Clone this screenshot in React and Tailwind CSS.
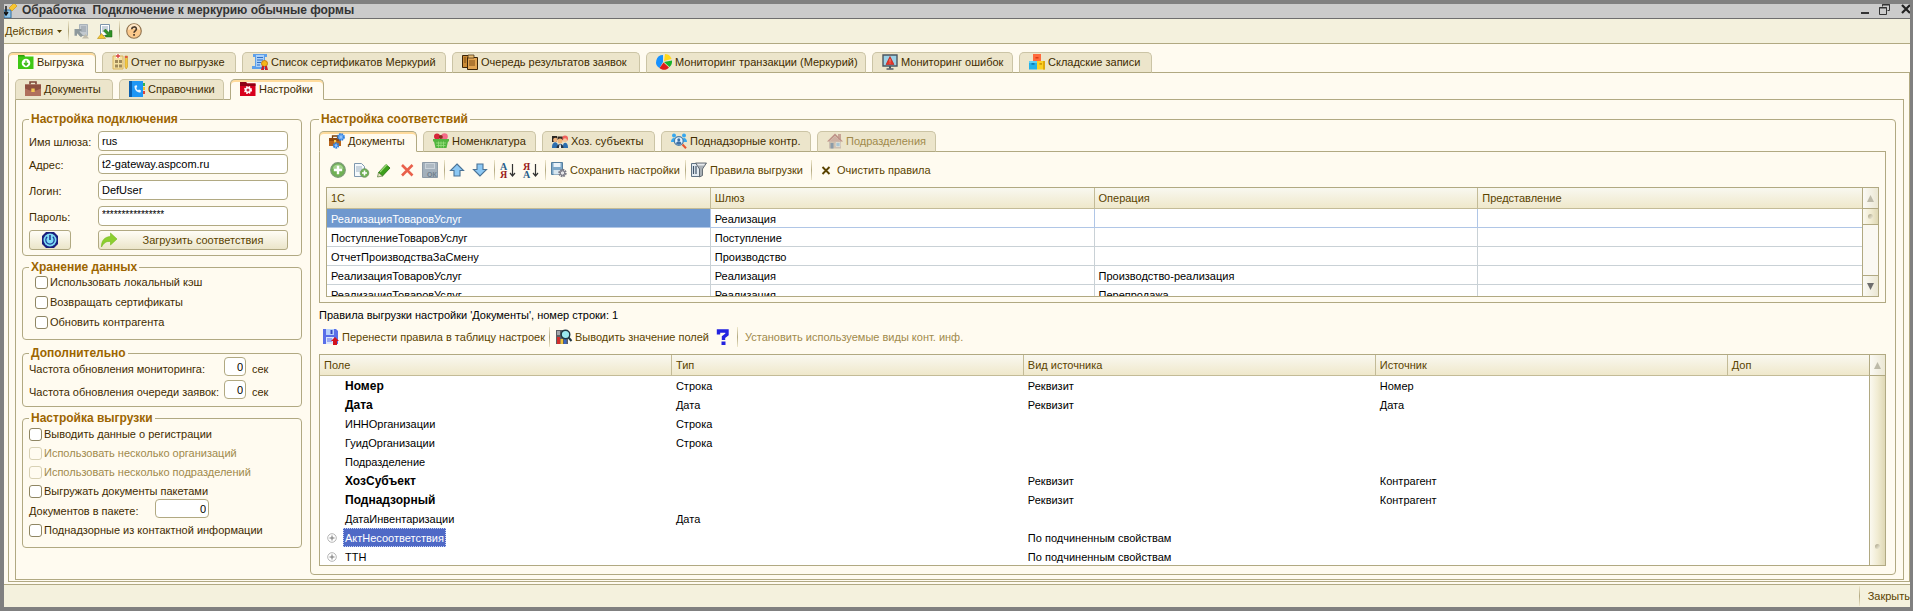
import { useState } from "react";
import clsx from "clsx";

const MAIN_TABS = [
  { id: "export", label: "Выгрузка", icon: "folderGreen", width: "w-[88px]" },
  { id: "report", label: "Отчет по выгрузке", icon: "report", width: "w-[134px]" },
  { id: "certs", label: "Список сертификатов Меркурий", icon: "certificate", width: "w-[204px]" },
  { id: "queue", label: "Очередь результатов заявок", icon: "papers", width: "w-[188px]" },
  { id: "transactions", label: "Мониторинг транзакции (Меркурий)", icon: "pie", width: "w-[220px]" },
  { id: "errors", label: "Мониторинг ошибок", icon: "monitor", width: "w-[141px]" },
  { id: "stock", label: "Складские записи", icon: "boxes", width: "w-[133px]" },
];

const SUB_TABS = [
  { id: "docs", label: "Документы", icon: "briefcase", width: "w-[98px]" },
  { id: "refs", label: "Справочники", icon: "phonebook", width: "w-[105px]" },
  { id: "settings", label: "Настройки", icon: "folderRed", width: "w-[94px]" },
];

const MAPPING_TABS = [
  { id: "docs", label: "Документы", icon: "caseGears", width: "w-[98px]" },
  { id: "items", label: "Номенклатура", icon: "basket", width: "w-[113px]" },
  { id: "subjects", label: "Хоз. субъекты", icon: "people", width: "w-[113px]" },
  { id: "supervised", label: "Поднадзорные контр.", icon: "inspect", width: "w-[150px]" },
  { id: "departments", label: "Подразделения", icon: "house", width: "w-[119px]", disabled: true },
];

const MAPPINGS = [
  ["РеализацияТоваровУслуг", "Реализация", "", ""],
  ["ПоступлениеТоваровУслуг", "Поступление", "", ""],
  ["ОтчетПроизводстваЗаСмену", "Производство", "", ""],
  ["РеализацияТоваровУслуг", "Реализация", "Производство-реализация", ""],
  ["РеализацияТоваровУслуг", "Реализация", "Перепродажа", ""],
];

const RULES = [
  { field: "Номер", type: "Строка", kind: "Реквизит", source: "Номер", bold: true },
  { field: "Дата", type: "Дата", kind: "Реквизит", source: "Дата", bold: true },
  { field: "ИННОрганизации", type: "Строка" },
  { field: "ГуидОрганизации", type: "Строка" },
  { field: "Подразделение" },
  { field: "ХозСубъект", kind: "Реквизит", source: "Контрагент", bold: true },
  { field: "Поднадзорный", kind: "Реквизит", source: "Контрагент", bold: true },
  { field: "ДатаИнвентаризации", type: "Дата" },
  { field: "АктНесоответствия", kind: "По подчиненным свойствам", group: true, selected: true },
  { field: "ТТН", kind: "По подчиненным свойствам", group: true },
];

const ICONS = {
  app: (
    <>
      <path d="M0 6h7v8H0z" fill="#8fc4e8" stroke="#2f6c9c" />
      <path d="M2 2v8M0 8l2 3 2-3" stroke="#111" strokeWidth="1.4" fill="none" />
      <path d="M5 4l5-5 3 3-5 5z" fill="#f7c531" stroke="#c88a12" strokeWidth=".6" />
    </>
  ),
  docPrev: (
    <>
      <path d="M5.500 1.500h8v11h-8z" fill="#c3cad0" stroke="#a9b3ba" />
      <path d="M7 4h5M7 6h5M7 8h5" stroke="#929ca6" />
      <path d="M0.500 6h7v2.200H5l4 4-2 2-4-4v2.500H.5z" fill="#8e999c" />
      <path d="M8 15.500l3.500-4.500 3.500 4.500z" fill="#c2bdab" />
    </>
  ),
  docNext: (
    <>
      <path d="M3.500 1.500h9v11h-9z" fill="#fff" stroke="#7d95ab" />
      <path d="M5 4h6M5 6h6M5 8h3" stroke="#8fa5b8" />
      <path d="M8.500 6l4 4V7.500H15v6.500H8.500v-2h2l-4-4z" fill="#2f9226" stroke="#1b6416" strokeWidth=".5" />
      <path d="M0.500 15.500l4-5 4 5z" fill="#f4c930" stroke="#b98d14" strokeWidth=".6" />
    </>
  ),
  help: (
    <>
      <circle cx="8" cy="8" r="7.300" fill="#fbc98c" stroke="#8f7350" strokeWidth="1.100" />
      <path d="M2 7a6 6 0 0 1 12 0c-4-2-8-2-12 0z" fill="#fde6c6" />
      <path d="M5.800 6.200c0-3 4.600-3 4.600-.2C10.400 7.800 8 7.800 8 9.800" fill="none" stroke="#4a3a2a" strokeWidth="1.600" />
      <path d="M7.200 11h1.700v1.700H7.200z" fill="#4a3a2a" />
    </>
  ),
  folderGreen: (
    <>
      <path d="M0 1h6l1 1.500h8.500V15H0z" fill="#3fc815" />
      <path d="M0 1h6l1 1.500H0z" fill="#2c9e0c" />
      <circle cx="8" cy="9" r="4.300" fill="#fff" />
      <path d="M8 6.500v4M6 9l2 2.200L10 9" stroke="#3fb81a" strokeWidth="1.400" fill="none" />
    </>
  ),
  folderRed: (
    <>
      <path d="M0 1h6l1 1.500h8.500V15H0z" fill="#d8001c" />
      <path d="M0 1h6l1 1.500h8.500V5H0z" fill="#8e0014" />
      <circle cx="8" cy="9" r="3" fill="#fff" stroke="#fff" strokeWidth="2" strokeDasharray="1.400 1" />
      <circle cx="8" cy="9" r="1.500" fill="#c4354a" />
    </>
  ),
  report: (
    <>
      <path d="M1 2h10v13H1z" fill="#f5e2a4" stroke="#d9b45f" />
      <path d="M4 0h4v4H4z" fill="#fff" />
      <path d="M6 0v4M4 2h4" stroke="#d8423c" strokeWidth="1.300" />
      <path d="M3 6h3v3H3zM7 6h3v3H7zM3 10.500h3v3H3zM7 10.500h3v3H7z" fill="#a08a5a" />
      <path d="M13 2h2.500v11L14.200 15 13 13z" fill="#f5c842" stroke="#c79a24" strokeWidth=".6" />
      <path d="M13 2h2.500v2H13z" fill="#dd5a41" />
    </>
  ),
  certificate: (
    <>
      <path d="M1 0h14v3h-2v12H0v-3h3V3H1z" fill="#5da0ea" />
      <path d="M4 1h8v12H4z" fill="#a8d0fa" />
      <path d="M5 3.500h6M5 6h6M5 8.500h4M5 11h3" stroke="#2f6fc4" strokeWidth="1.200" />
      <circle cx="12.500" cy="9.500" r="3" fill="#f5b618" stroke="#c47c10" />
      <path d="M10 12h2v4H9zM13 12h2l1 4h-3z" fill="#c81f2b" />
    </>
  ),
  papers: (
    <>
      <path d="M0.500 1.500h9v12h-9z" fill="#c98a35" stroke="#3c2508" />
      <path d="M5.500 3.500h10v12h-10z" fill="#e2a552" stroke="#3c2508" />
      <path d="M2 4h2M2 6h2M2 8h2M7 7h6M7 9h6M7 11h6" stroke="#7c4b12" />
      <path d="M6 1h6v3H6z" fill="#e9bd74" stroke="#3c2508" strokeWidth=".7" />
    </>
  ),
  pie: (
    <>
      <path d="M7 8V1a7 7 0 0 0-3.500 13z" fill="#1691ff" />
      <path d="M8 7l1-7c4 0 6 3 6.500 5z" fill="#ffd91a" />
      <path d="M8 8l8-1.500c.3 3-.7 5-2.500 6.500z" fill="#18b32a" />
      <path d="M7.500 8.500L13 13.500c-2.500 3-7 3-9.500.5z" fill="#e01b1b" />
    </>
  ),
  monitor: (
    <>
      <path d="M1 1h14v11H1z" fill="#9cd0e6" stroke="#4b5560" strokeWidth="1.400" />
      <path d="M8 2.500l4 8H4z" fill="#e63327" stroke="#b51e14" strokeWidth=".6" />
      <path d="M8 5v2.800M8 8.600v1" stroke="#f08a80" />
      <path d="M7 12h2v2.500H7z" fill="#4b5560" />
      <path d="M4.500 14.300h7v1.400h-7z" fill="#4b5560" />
    </>
  ),
  boxes: (
    <>
      <path d="M4 0h8v7H4z" fill="#ff6a3c" />
      <path d="M6.500 3h3v1.500h-3z" fill="#d93a12" />
      <path d="M0 7h8v8.500H0z" fill="#23b2e8" />
      <path d="M0 7h8v2H0z" fill="#5fd0f5" />
      <path d="M2.500 9h3v1.800h-3z" fill="#0c7cb4" />
      <path d="M8 7h8v8.500H8z" fill="#fbd024" />
      <path d="M14 7h2v8.500h-2z" fill="#e0a80c" />
      <path d="M10.500 9h2.500v1.800h-2.500z" fill="#d39a08" />
    </>
  ),
  briefcase: (
    <>
      <path d="M5 3.500V1h6v2.500" fill="none" stroke="#7d4638" strokeWidth="1.600" />
      <path d="M0 3.500h16V15H0z" fill="#b0705c" />
      <path d="M0 3.500h16v4l-5 2H5l-5-2z" fill="#8d4f40" />
      <path d="M6.300 7.500h3.400V11H6.300z" fill="#f3c653" />
    </>
  ),
  phonebook: (
    <>
      <path d="M13 2h3v3h-3z" fill="#35b34a" />
      <path d="M13 6h3v3h-3z" fill="#f4c22b" />
      <path d="M13 10h3v3h-3z" fill="#e2453a" />
      <path d="M0 0h14v16H0z" fill="#1f97f5" />
      <path d="M0 0h3v16H0z" fill="#0a5fae" />
      <path d="M5.500 5c0 4 2 6.500 6 6.500l.5-2-2-1-1 .8c-1-.6-1.500-1.500-1.700-2.500l1-.8L7.500 4z" fill="#e8f5ff" />
    </>
  ),
  caseGears: (
    <>
      <path d="M3.500 5V3h5v2" fill="none" stroke="#7b420e" strokeWidth="1.300" />
      <path d="M0 5h12v8H0z" fill="#b8641a" />
      <path d="M0 5h12v3H0z" fill="#8e480e" />
      <path d="M5 7h2.200v2.500H5z" fill="#f7cd57" />
      <circle cx="12" cy="4" r="2.800" fill="#8fc0fa" stroke="#2b7fe0" strokeWidth="2.200" strokeDasharray="1.600 .6" />
      <circle cx="7" cy="12.500" r="2.200" fill="#8fc0fa" stroke="#2b7fe0" strokeWidth="2" strokeDasharray="1.500 .6" />
    </>
  ),
  basket: (
    <>
      <circle cx="4" cy="3.500" r="3" fill="#d6273a" />
      <circle cx="11.500" cy="3.500" r="3.300" fill="#f36b88" />
      <circle cx="7.800" cy="4" r="2" fill="#8a2a1c" />
      <path d="M0 6h16v2.500h-1L13.500 15h-11L1 8.500H0z" fill="#52b540" />
      <path d="M3 10h10M3.500 12.500h9M5.500 8.500v6M8 8.500v6M10.500 8.500v6" stroke="#9be07f" strokeWidth=".8" />
    </>
  ),
  people: (
    <>
      <path d="M0 3h5v6H0z" fill="#2a2622" />
      <circle cx="3.300" cy="7" r="2.200" fill="#eeb27c" />
      <circle cx="13" cy="5.500" r="3" fill="#f0625c" />
      <circle cx="13" cy="7.200" r="2" fill="#f6c79a" />
      <path d="M5.500 3.500h5V7h-5z" fill="#352b24" />
      <circle cx="8" cy="8" r="2.500" fill="#f2b67d" />
      <path d="M0 14c0-6 6-6 6-1 1-3 4-3 5 0 0-5 5-4 5 1v1H0z" fill="#2d6fb0" />
      <path d="M4.500 15c0-5 7-5 7 0z" fill="#2b3440" />
      <path d="M7.500 11.500h1.200l.3 3.500h-2z" fill="#fff" />
    </>
  ),
  inspect: (
    <>
      <circle cx="3" cy="2.500" r="2" fill="#35a7ef" />
      <circle cx="13" cy="2.500" r="2" fill="#35a7ef" />
      <path d="M0 9c0-5 5-5 5-2v2zM11 9V7c0-3 5-3 5 2z" fill="#35a7ef" />
      <circle cx="7.800" cy="8" r="4.400" fill="#e4f4ff" stroke="#4d7fa8" strokeWidth="1.300" />
      <circle cx="7.800" cy="6.700" r="1.500" fill="#3c6fa5" />
      <path d="M5 10.500c.5-3 5-3 5.500 0-1.500 1.700-4 1.700-5.500 0z" fill="#3c6fa5" />
      <path d="M11.500 11.500l3.500 3.800" stroke="#e8552f" strokeWidth="2" />
    </>
  ),
  house: (
    <g opacity=".6">
      <path d="M11 1h3v6h-3z" fill="#b07a72" />
      <path d="M2 8h12v7.500H2z" fill="#b9a9a0" />
      <path d="M8 0.500l8 8h-2L8 3 2 8.500H0z" fill="#a05c5c" />
      <path d="M8 3l6 5.500H2z" fill="#b98e88" />
      <path d="M3.500 10h3v5.500h-3z" fill="#4c6a92" />
      <path d="M9 9.500h4v4H9z" fill="#7fb0d6" stroke="#eee" strokeWidth=".6" />
    </g>
  ),
  power: (
    <>
      <path d="M4 0h8l4 4v8l-4 4H4l-4-4V4z" fill="#1a1f7c" />
      <circle cx="8" cy="8" r="6.500" fill="#7fdcf5" />
      <path d="M5.200 4.800a4.200 4.200 0 1 0 5.600 0" fill="none" stroke="#1a3a9c" strokeWidth="1.200" />
      <path d="M8 3v5" stroke="#1a1f7c" strokeWidth="1.400" />
    </>
  ),
  share: <path d="M9.500 1l6.500 6-6.500 6V9.500C5.500 9 3 10.500 0.500 15 0.300 9 3 5 9.500 4.500z" fill="#8ccf2f" stroke="#74b81f" strokeWidth=".6" />,
  add: (
    <>
      <circle cx="8" cy="8" r="7.300" fill="#6fb054" stroke="#7c9b78" strokeWidth="1.200" />
      <path d="M2.500 6.500a5.800 5.800 0 0 1 11 0c-3.500 1.500-7.500 1.500-11 0z" fill="#a4d28f" />
      <path d="M8 3.800v8.400M3.800 8h8.400" stroke="#fff" strokeWidth="2.400" />
    </>
  ),
  addDoc: (
    <>
      <path d="M1.500 1.500h7l3 3v10h-10z" fill="#f5f9fc" stroke="#7f98ae" />
      <path d="M3 5h6M3 7h6M3 9h4" stroke="#9db1c2" />
      <circle cx="11.500" cy="11" r="4.300" fill="#6fb054" stroke="#6c9360" strokeWidth=".8" />
      <path d="M11.500 8.500v5M9 11h5" stroke="#fff" strokeWidth="1.600" />
    </>
  ),
  pencil: (
    <>
      <path d="M2.500 10.500l7.500-8 4 3.500-7.500 8z" fill="#3da01c" stroke="#1f6b0c" strokeWidth=".8" />
      <path d="M4 10l7-7.500" stroke="#9bdb74" strokeWidth="1.200" />
      <path d="M2.500 10.500L1.500 15l5-1z" fill="#e9e4c8" stroke="#3b6b1c" strokeWidth=".6" />
    </>
  ),
  remove: <path d="M3 3l10.500 10.500M13.500 3L3 13.500" stroke="#e9604b" strokeWidth="2.600" />,
  saveOk: (
    <>
      <path d="M0.500 0.500h15v15H0.500z" fill="#a3b0bb" stroke="#8d9aa6" />
      <path d="M3 1h10v6H3z" fill="#c9d2d9" />
      <path d="M4 3h8M4 5h8" stroke="#95a2ad" />
      <text x="5" y="15" fontSize="7" fontWeight="bold" fill="#71808d" fontFamily="Liberation Sans">ОК</text>
    </>
  ),
  up: <path d="M8 2l6.500 6.500H11V14H5V8.500H1.500z" fill="#8cc8f4" stroke="#4b7396" strokeWidth="1.100" />,
  down: <path d="M8 14L1.500 7.500H5V2h6v5.500h3.500z" fill="#8cc8f4" stroke="#4b7396" strokeWidth="1.100" />,
  sortAsc: (
    <>
      <text x="0" y="7.500" fontSize="10" fontWeight="bold" fill="#2a5f8a" fontFamily="Liberation Serif">А</text>
      <text x="0" y="16" fontSize="10" fontWeight="bold" fill="#9c1c1c" fontFamily="Liberation Serif">Я</text>
      <path d="M12.500 2v11M10 11l2.500 3 2.500-3" stroke="#333" strokeWidth="1.200" fill="none" />
    </>
  ),
  sortDesc: (
    <>
      <text x="0" y="7.500" fontSize="10" fontWeight="bold" fill="#9c1c1c" fontFamily="Liberation Serif">Я</text>
      <text x="0" y="16" fontSize="10" fontWeight="bold" fill="#2a5f8a" fontFamily="Liberation Serif">А</text>
      <path d="M12.500 2v11M10 11l2.500 3 2.500-3" stroke="#333" strokeWidth="1.200" fill="none" />
    </>
  ),
  saveGear: (
    <>
      <path d="M0.500 0.500h11v12h-11z" fill="#7fa9c9" stroke="#56809f" />
      <path d="M2.500 1h7v4h-7z" fill="#eaf3f9" />
      <path d="M2.500 8h7v4.500h-7z" fill="#d8e6ef" />
      <circle cx="11.500" cy="11" r="3" fill="#e5e5e8" stroke="#7b7b86" strokeWidth="2.400" strokeDasharray="1.600 .7" />
      <circle cx="11.500" cy="11" r="2.300" fill="none" stroke="#7b7b86" />
    </>
  ),
  filter: (
    <>
      <path d="M0.500 1.500h8v13h-8z" fill="#e3ebf1" stroke="#5f7283" />
      <path d="M2.500 4v8M5 4v8" stroke="#41556a" strokeWidth="1.200" />
      <path d="M4.500 1h11L11.500 7v6.500L8.500 15V7z" fill="#a9b0b6" stroke="#5b646c" strokeWidth=".9" />
      <path d="M6 1.800h8L13 3.500H7z" fill="#e8ebee" />
    </>
  ),
  cross: <path d="M4.500 5l7 7M11.500 5l-7 7" stroke="#5a4300" strokeWidth="1.900" />,
  saveRules: (
    <>
      <path d="M0 0h13l2 2v13H0z" fill="#5a6fe8" />
      <path d="M3 0h8v6H3z" fill="#b7d2fb" />
      <path d="M7.500 1h2v4h-2z" fill="#3446c0" />
      <path d="M3 8h8v7H3z" fill="#dbe7fd" />
      <path d="M4 10h5M4 12h5" stroke="#5a6fe8" />
      <path d="M12 8l4 4h-2v4h-4v-4H8z" fill="#d3121c" />
    </>
  ),
  fieldValues: (
    <>
      <path d="M0 1h12v14H0z" fill="#5b5d63" />
      <path d="M1 8h3v7H1z" fill="#d22e2e" />
      <path d="M4.500 10h2.500v5H4.500z" fill="#efc23a" />
      <path d="M8 9h2.500v6H8z" fill="#3b66c0" />
      <path d="M1 2h3v4H1z" fill="#a4a6ac" />
      <circle cx="9.500" cy="5.500" r="4.300" fill="#9be8ee" stroke="#1f3640" strokeWidth="1.400" />
      <path d="M12.500 8.500l3 3.500" stroke="#1f3640" strokeWidth="2" />
    </>
  ),
  question: (
    <>
      <path d="M3.500 5.500V2H12v3.500L8.500 8v3" fill="none" stroke="#2323e0" strokeWidth="3.400" />
      <path d="M6.500 12.500h4V16h-4z" fill="#2323e0" />
    </>
  ),
};

function Icon({ name }) {
  return (
    <svg className="h-4 w-4 shrink-0 overflow-visible" viewBox="0 0 16 16" fill="none" aria-hidden="true">
      {ICONS[name]}
    </svg>
  );
}

function Separator() {
  return (
    <span className="flex h-5 w-2 shrink-0 justify-center">
      <span className="w-px bg-linear-to-b from-[#efe8cc] via-[#b3a981] to-[#efe8cc]" />
    </span>
  );
}

function TabBar({ tabs, active, onChange, label }) {
  return (
    <div role="tablist" aria-label={label} className="relative z-10 -mb-px flex gap-[6px]">
      {tabs.map((tab) => {
        const isActive = tab.id === active;
        return (
          <button
            key={tab.id}
            type="button"
            role="tab"
            aria-selected={isActive}
            disabled={tab.disabled}
            onClick={() => onChange(tab.id)}
            className={clsx(
              "flex h-[21px] items-center gap-[3px] rounded-t-[5px] border pb-px pl-[9px] whitespace-nowrap",
              tab.width,
              isActive
                ? "border-[#b1a982] border-b-[#fffbf0] bg-[#fffbf0] shadow-[inset_0_2px_0_#ffdb9c]"
                : "border-[#cbc4a5] border-b-[#b1a982] bg-[#ece5cb]",
              tab.disabled ? "text-[#a08a4c]" : "text-[#3f2c00]"
            )}
          >
            <Icon name={tab.icon} />
            {tab.label}
          </button>
        );
      })}
    </div>
  );
}

function Group({ title, className, children }) {
  return (
    <fieldset className={clsx("min-w-0 rounded-[4px] border border-[#b1a982]", className)}>
      <legend className="px-[2px] text-[12px] leading-[15px] font-bold text-[#9c6500]">{title}</legend>
      {children}
    </fieldset>
  );
}

function TextRow({ id, label, value, className, inputClass }) {
  return (
    <div className={clsx("flex h-5 items-center", className)}>
      <label htmlFor={id} className="w-[69px] shrink-0 pt-[2px]">
        {label}
      </label>
      <input
        id={id}
        type="text"
        defaultValue={value}
        className={clsx(
          "h-5 w-[190px] rounded-[4px] border border-[#b1a982] bg-white px-[3px] text-black outline-none",
          inputClass
        )}
      />
    </div>
  );
}

function NumberRow({ id, label, value, unit, labelClass, inputClass }) {
  return (
    <div className="flex h-[19px] items-center">
      <label htmlFor={id} className={clsx("shrink-0 self-end whitespace-nowrap", labelClass)}>
        {label}
      </label>
      <input
        id={id}
        type="text"
        inputMode="numeric"
        defaultValue={value}
        className={clsx(
          "h-[19px] rounded-[4px] border border-[#b1a982] bg-white px-[2px] text-right text-black outline-none",
          inputClass
        )}
      />
      {unit && <span className="self-end pl-[6px]">{unit}</span>}
    </div>
  );
}

function Check({ label, disabled }) {
  return (
    <label className={clsx("flex h-[14px] items-center gap-[2px] whitespace-nowrap", disabled && "text-[#a08a4c]")}>
      <input
        type="checkbox"
        disabled={disabled}
        className="h-[13px] w-[13px] shrink-0 appearance-none rounded-[3px] border border-[#8f8663] bg-white checked:bg-[#b1a982] disabled:border-[#d8d1b4] disabled:bg-[#fffbf0]"
      />
      {label}
    </label>
  );
}

function ToolButton({ icon, label, width = "w-[23px]", title, disabled }) {
  return (
    <button
      type="button"
      aria-label={label ? undefined : title}
      disabled={disabled}
      className={clsx(
        "flex h-5 shrink-0 items-center gap-[3px] whitespace-nowrap",
        width,
        disabled ? "text-[#a08a4c]" : "text-[#5a4300]"
      )}
    >
      {icon && <Icon name={icon} />}
      {label}
    </button>
  );
}

function HeaderCell({ children, className }) {
  return (
    <th
      scope="col"
      className={clsx(
        "h-[21px] border-r border-b border-[#c3bb97] bg-linear-to-b from-[#f9f8f0] to-[#efe8cb] px-1 text-left font-normal text-[#5a4300] last:border-r-0",
        className
      )}
    >
      {children}
    </th>
  );
}

function Arrow({ up }) {
  return (
    <svg className="h-[7px] w-[7px]" viewBox="0 0 7 7" aria-hidden="true">
      <path d={up ? "M3.500 0L7 7H0z" : "M0 0h7L3.500 7z"} fill={up ? "#bdbaa9" : "#6d6d6d"} />
    </svg>
  );
}

const BAR = "bg-linear-to-r from-[#fbf9f0] via-[#f1ecd3] to-[#dfd8b5]";

function ScrollBar({ full }) {
  return (
    <div className="flex w-4 shrink-0 flex-col border-l border-[#b1a982] bg-[#faf8f2]">
      <button
        type="button"
        aria-label="Вверх"
        className="flex h-[21px] shrink-0 items-center justify-center border-b border-[#b1a982] bg-linear-to-r from-[#fbfaf5] to-[#ebe7d3]"
      >
        <Arrow up />
      </button>
      <div
        className={clsx(
          "flex justify-center",
          BAR,
          full ? "flex-1 items-end pb-4" : "h-4 items-center border-b border-[#b1a982]"
        )}
      >
        <span className="h-[5px] w-[5px] rounded-full bg-linear-to-br from-[#a9a388] to-[#f7f3e0]" />
      </div>
      {!full && (
        <button
          type="button"
          aria-label="Вниз"
          className="mt-auto flex h-[21px] shrink-0 items-center justify-center border-t border-[#b1a982] bg-linear-to-r from-[#fbfaf5] to-[#ebe7d3]"
        >
          <Arrow />
        </button>
      )}
    </div>
  );
}

function MappingTable() {
  return (
    <div className="flex h-[110px] overflow-hidden border border-[#b1a982] bg-white">
      <div className="min-w-0 flex-1 overflow-hidden">
        <table className="w-full table-fixed border-separate border-spacing-0">
          <thead>
            <tr>
              {["1С", "Шлюз", "Операция", "Представление"].map((name) => (
                <HeaderCell key={name}>{name}</HeaderCell>
              ))}
            </tr>
          </thead>
          <tbody>
            {MAPPINGS.map((row, i) => (
              <tr key={i}>
                {row.map((cell, j) => (
                  <td
                    key={j}
                    className={clsx(
                      "h-[19px] border-r border-b px-1 pt-px last:border-r-0",
                      i === 0 ? "border-[#b0c6e6]" : "border-[#c9d1d6]",
                      i === 0 && j === 0 ? "bg-[#6f98ce] text-white" : "text-black"
                    )}
                  >
                    {cell}
                  </td>
                ))}
              </tr>
            ))}
          </tbody>
        </table>
      </div>
      <ScrollBar />
    </div>
  );
}

function RulesTable() {
  return (
    <div className="flex h-[212px] overflow-hidden border border-[#b1a982] bg-white">
      <div className="min-w-0 flex-1 overflow-hidden">
        <table className="w-full table-fixed border-separate border-spacing-0 text-black">
          <thead>
            <tr>
              <HeaderCell className="w-[22.72%]">Поле</HeaderCell>
              <HeaderCell className="w-[22.72%]">Тип</HeaderCell>
              <HeaderCell className="w-[22.72%]">Вид источника</HeaderCell>
              <HeaderCell className="w-[22.72%]">Источник</HeaderCell>
              <HeaderCell>Доп</HeaderCell>
            </tr>
          </thead>
          <tbody>
            {RULES.map((rule) => (
              <tr key={rule.field}>
                <td className={clsx("h-[19px] p-0", rule.bold && "text-[12px] font-bold")}>
                  <div className="flex h-[19px] items-center">
                    <span className="flex w-[23px] shrink-0 items-center pl-[7px]">
                      {rule.group && (
                        <svg className="h-[10px] w-[10px]" viewBox="0 0 10 10" aria-hidden="true">
                          <circle cx="5" cy="5" r="4.300" fill="#fff" stroke="#b5b5b5" />
                          <path d="M5 2.500v5M2.500 5h5" stroke="#777" />
                        </svg>
                      )}
                    </span>
                    <span
                      className={clsx(
                        "flex h-[19px] items-center border px-px",
                        rule.selected
                          ? "border-dotted border-[#c9d4f5] bg-[#4f69c6] text-white"
                          : "border-transparent"
                      )}
                    >
                      {rule.field}
                    </span>
                  </div>
                </td>
                <td className="px-1 py-0">{rule.type}</td>
                <td className="px-1 py-0">{rule.kind}</td>
                <td className="px-1 py-0">{rule.source}</td>
                <td />
              </tr>
            ))}
          </tbody>
        </table>
      </div>
      <ScrollBar full />
    </div>
  );
}

function Sidebar() {
  return (
    <aside className="w-[280px] shrink-0">
      <Group title="Настройка подключения" className="px-[6px] pb-[5px]">
        <TextRow id="gateway" label="Имя шлюза:" value="rus" className="mt-1" />
        <TextRow id="address" label="Адрес:" value="t2-gateway.aspcom.ru" className="mt-[3px]" />
        <TextRow id="login" label="Логин:" value="DefUser" className="mt-[6px]" />
        <TextRow id="password" label="Пароль:" value="****************" className="mt-[6px]" inputClass="pb-1 text-[10px]" />
        <div className="mt-1 flex">
          <button
            type="button"
            aria-label="Подключение"
            className="mr-[27px] flex h-5 w-[42px] items-center justify-center rounded-[3px] border border-[#b1a982] bg-linear-to-b from-[#fffdf6] to-[#ebe5c9]"
          >
            <Icon name="power" />
          </button>
          <button
            type="button"
            className="flex h-5 w-[190px] items-center rounded-[3px] border border-[#b1a982] bg-linear-to-b from-[#fffdf6] to-[#ebe5c9] px-[2px] text-[#5a4300]"
          >
            <Icon name="share" />
            <span className="flex-1 pl-1 text-center">Загрузить соответствия</span>
          </button>
        </div>
      </Group>

      <Group title="Хранение данных" className="mt-1 px-[6px] pb-[10px]">
        <div className="flex flex-col gap-[6px] pl-[6px]">
          <Check label="Использовать локальный кэш" />
          <Check label="Возвращать сертификаты" />
          <Check label="Обновить контрагента" />
        </div>
      </Group>

      <Group title="Дополнительно" className="mt-[6px] px-[6px] pb-[7px]">
        <div className="-mt-1 flex flex-col gap-1">
          <NumberRow id="monitorRate" label="Частота обновления мониторинга:" value="0" unit="сек" labelClass="w-[195px]" inputClass="w-[22px]" />
          <NumberRow id="queueRate" label="Частота обновления очереди заявок:" value="0" unit="сек" labelClass="w-[195px]" inputClass="w-[22px]" />
        </div>
      </Group>

      <Group title="Настройка выгрузки" className="mt-1 px-[6px] pb-[10px]">
        <div className="flex flex-col gap-[5px] pt-px pb-px">
          <Check label="Выводить данные о регистрации" />
          <Check label="Использовать несколько организаций" disabled />
          <Check label="Использовать несколько подразделений" disabled />
          <Check label="Выгружать документы пакетами" />
        </div>
        <NumberRow id="batch" label="Документов в пакете:" value="0" labelClass="w-[126px]" inputClass="w-[54px]" />
        <div className="pt-[5px]">
          <Check label="Поднадзорные из контактной информации" />
        </div>
      </Group>
    </aside>
  );
}

function Mappings() {
  const [tab, setTab] = useState("docs");

  return (
    <Group title="Настройка соответствий" className="flex-1 px-2 pb-2">
      <div className="pr-px">
        <div className="pt-1">
          <TabBar tabs={MAPPING_TABS} active={tab} onChange={setTab} label="Соответствия" />
        </div>
        <div className="border border-[#b1a982] px-[6px] pb-[5px]">
          <div className="flex h-[35px] items-center pl-1">
            <ToolButton icon="add" title="Добавить" />
            <ToolButton icon="addDoc" title="Скопировать" />
            <ToolButton icon="pencil" title="Изменить" />
            <ToolButton icon="remove" title="Удалить" />
            <ToolButton icon="saveOk" title="Записать" width="w-[18px]" />
            <Separator />
            <span className="w-px" />
            <ToolButton icon="up" title="Переместить вверх" />
            <ToolButton icon="down" title="Переместить вниз" width="w-[18px]" />
            <Separator />
            <span className="w-[2px]" />
            <ToolButton icon="sortAsc" title="По возрастанию" />
            <ToolButton icon="sortDesc" title="По убыванию" width="w-[18px]" />
            <Separator />
            <span className="w-[2px]" />
            <ToolButton icon="saveGear" label="Сохранить настройки" width="w-[130px]" />
            <Separator />
            <span className="w-[2px]" />
            <ToolButton icon="filter" label="Правила выгрузки" width="w-[116px]" />
            <Separator />
            <span className="w-[3px]" />
            <ToolButton icon="cross" label="Очистить правила" width="w-auto" />
          </div>
          <MappingTable />
        </div>

        <p className="flex h-6 items-center text-black">
          Правила выгрузки настройки 'Документы', номер строки: 1
        </p>
        <div className="flex h-[27px] items-start pl-1">
          <ToolButton icon="saveRules" label="Перенести правила в таблицу настроек" width="w-[222px]" />
          <Separator />
          <span className="w-[3px]" />
          <ToolButton icon="fieldValues" label="Выводить значение полей" width="w-[159px]" />
          <ToolButton icon="question" title="Справка" width="w-[18px]" />
          <Separator />
          <span className="w-1" />
          <ToolButton label="Установить используемые виды конт. инф." width="w-auto" disabled />
        </div>
        <RulesTable />
      </div>
    </Group>
  );
}

export default function App() {
  const [mainTab, setMainTab] = useState("export");
  const [subTab, setSubTab] = useState("settings");

  return (
    <div className="flex min-h-screen flex-col overflow-hidden border-4 border-r-[3px] border-[#808080] bg-[#fffbf0] font-['Liberation_Sans',Arial,sans-serif] text-[11px] leading-[14px] text-[#3f2c00]">
      {/* Title bar */}
      <header className="flex h-[15px] items-start overflow-hidden border-b border-[#6e6e6e] bg-[#cbcbcb] text-[12px] leading-[12px] font-bold text-[#333]">
        <Icon name="app" />
        <h1 className="pl-[2px] whitespace-pre">Обработка  Подключение к меркурию обычные формы</h1>
        <div className="ml-auto flex items-start gap-[10px]">
          <button type="button" aria-label="Свернуть" className="flex h-[10px] w-2 items-end">
            <span className="h-[2px] w-2 bg-[#333]" />
          </button>
          <button type="button" aria-label="Развернуть">
            <svg className="h-[11px] w-3" viewBox="0 0 12 11" fill="none" stroke="#333" aria-hidden="true">
              <path d="M3.500 2.500v-2h7v6h-2M3 1h8" />
              <path d="M.5 3.500h7v7h-7zM0 4h8" />
            </svg>
          </button>
          <button type="button" aria-label="Закрыть окно">
            <svg className="h-[10px] w-[9px]" viewBox="0 0 9 10" aria-hidden="true">
              <path d="M1 1l8 8M9 1L1 9" stroke="#222" strokeWidth="2.200" />
            </svg>
          </button>
        </div>
      </header>

      {/* Command bar */}
      <div className="flex h-[25px] items-center border-b border-[#b1a982] bg-[#f4f1dd] pl-px">
        <button type="button" className="flex items-center gap-1 text-[#5a4300]">
          Действия
          <svg className="h-[3px] w-[5px]" viewBox="0 0 5 3" aria-hidden="true">
            <path d="M0 0h5L2.500 3z" fill="#5a4300" />
          </svg>
        </button>
        <span className="w-[2px]" />
        <Separator />
        <span className="w-[2px]" />
        <ToolButton icon="docPrev" title="Восстановить значения" disabled />
        <ToolButton icon="docNext" title="Сохранить значения" width="w-[18px]" />
        <Separator />
        <span className="w-[3px]" />
        <ToolButton icon="help" title="Справка" />
      </div>

      {/* Main area */}
      <main className="flex-1 pt-2 pb-[2px] pl-1">
        <TabBar tabs={MAIN_TABS} active={mainTab} onChange={setMainTab} label="Разделы" />
        <div className="border border-[#b1a982] pt-[6px] pr-[5px] pb-px pl-[6px]">
          <TabBar tabs={SUB_TABS} active={subTab} onChange={setSubTab} label="Выгрузка" />
          <div className="flex items-start gap-2 border border-[#b1a982] pt-3 pr-[7px] pb-1 pl-[6px]">
            <Sidebar />
            <Mappings />
          </div>
        </div>
      </main>

      {/* Footer */}
      <footer className="flex h-[23px] items-center justify-end border-t border-[#b1a982] bg-[#f4f1dd]">
        <Separator />
        <button type="button" className="pl-1 text-[#5a4300]">
          Закрыть
        </button>
      </footer>
    </div>
  );
}
